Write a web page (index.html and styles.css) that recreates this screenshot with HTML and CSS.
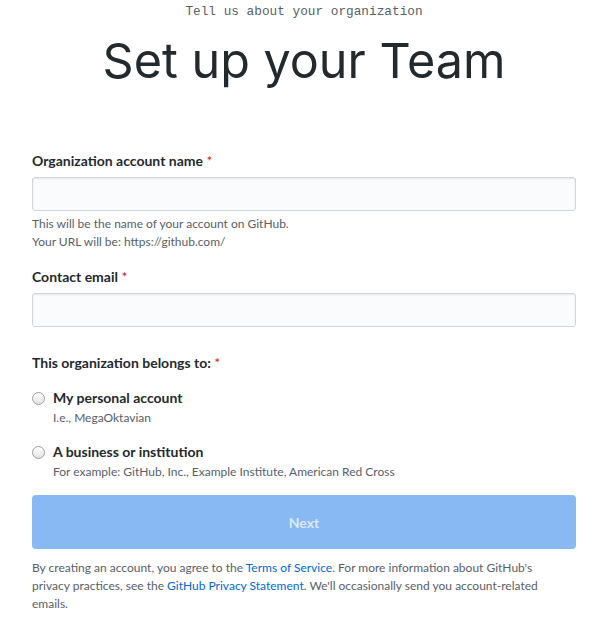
FILE: index.html
```html
<!DOCTYPE html>
<html lang="en">
<head>
<meta charset="utf-8">
<title>Set up your Team</title>
<link rel="stylesheet" href="styles.css">
</head>
<body>
<main class="page">
  <header class="intro">
    <p class="eyebrow">Tell us about your organization</p>
    <h1 class="title">Set up your Team</h1>
  </header>
  <form class="form">
    <div class="field">
      <label class="label">Organization account name <span class="req">*</span></label>
      <input class="input" type="text">
      <p class="note">This will be the name of your account on GitHub.<br>Your URL will be: https://github.com/</p>
    </div>
    <div class="field">
      <label class="label">Contact email <span class="req">*</span></label>
      <input class="input" type="email">
    </div>
    <div class="field field-radios">
      <p class="label">This organization belongs to: <span class="req">*</span></p>
      <label class="radio">
        <span class="dot"></span>
        <span class="radio-text">
          <span class="radio-title">My personal account</span>
          <span class="radio-note">I.e., MegaOktavian</span>
        </span>
      </label>
      <label class="radio">
        <span class="dot"></span>
        <span class="radio-text">
          <span class="radio-title">A business or institution</span>
          <span class="radio-note">For example: GitHub, Inc., Example Institute, American Red Cross</span>
        </span>
      </label>
    </div>
    <button class="btn" type="button">Next</button>
    <p class="legal">By creating an account, you agree to the <a href="#">Terms of Service</a>. For more information about GitHub's privacy practices, see the <a href="#">GitHub Privacy Statement</a>. We'll occasionally send you account-related emails.</p>
  </form>
</main>
</body>
</html>
```
FILE: styles.css
```css
* { box-sizing: border-box; }
html, body { margin: 0; padding: 0; background: #fff; }
body {
  font-family: Lato, "Noto Sans", sans-serif;
  color: #24292e;
}
.page {
  padding: 0 27px 0 32px;
}
.intro {
  text-align: center;
}
.eyebrow {
  margin: 0;
  padding-top: 4px;
  font-family: "Liberation Mono", monospace;
  font-size: 12.75px;
  line-height: 16px;
  color: #586069;
}
.title {
  margin: 12px 0 0;
  font-family: Inter, sans-serif;
  font-weight: 400;
  font-size: 48.5px;
  line-height: 58px;
}
.form {
  margin-top: 61px;
  display: flex;
  flex-direction: column;
}
.field {
  display: flex;
  flex-direction: column;
  margin-bottom: 16px;
}
.label {
  margin: 0 0 6px;
  font-size: 14px;
  font-weight: 700;
  line-height: 20px;
}
.req { color: #cb2431; font-weight: 400; }
.input {
  height: 34px;
  width: 100%;
  border: 1px solid #d1d5da;
  border-radius: 3px;
  background: #fafbfc;
  box-shadow: inset 0 1px 2px rgba(27,31,35,0.075);
}
.note {
  margin: 4px 0 0;
  font-size: 12px;
  line-height: 18px;
  color: #586069;
}
.field-radios { margin-top: 10px; margin-bottom: 14px; }
.field-radios .label { margin-bottom: 15px; }
.radio {
  display: flex;
  gap: 8px;
  margin-bottom: 15px;
}
.radio:last-child { margin-bottom: 0; }
.dot {
  width: 13px;
  height: 13px;
  margin-top: 4px;
  border: 1px solid #a0a0a0;
  border-radius: 50%;
  background: linear-gradient(#fff, #e2e2e2);
  flex: none;
}
.radio-text { display: flex; flex-direction: column; }
.radio-title { font-size: 14px; font-weight: 700; line-height: 20px; }
.radio-note { margin-top: 1px; font-size: 12px; line-height: 18px; color: #586069; }
.btn {
  height: 54px;
  width: 100%;
  border: 0;
  border-radius: 4px;
  background: #88b9f3;
  color: rgba(255,255,255,0.7);
  font-family: inherit;
  font-size: 14px;
  font-weight: 700;
}
.legal {
  margin: 10px 0 0;
  max-width: 530px;
  font-size: 12px;
  line-height: 18px;
  color: #586069;
}
.legal a { color: #0366d6; text-decoration: none; }
```
